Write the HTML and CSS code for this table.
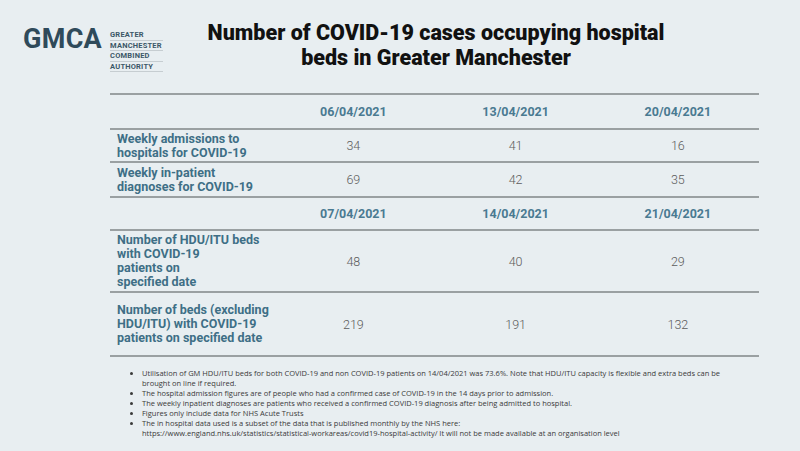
FILE: index.html
```html
<!DOCTYPE html>
<html lang="en">
<head>
<meta charset="utf-8">
<link rel="stylesheet" href="styles.css">
</head>
<body>
<div class="page">
  <header class="top">
    <div class="logo">
      <span class="logo-mark">GMCA</span>
      <div class="logo-words">
        <span>GREATER</span>
        <span>MANCHESTER</span>
        <span>COMBINED</span>
        <span>AUTHORITY</span>
      </div>
    </div>
    <h1 class="title">Number of COVID-19 cases occupying hospital<br>beds in Greater Manchester</h1>
  </header>

  <table class="data">
    <tr class="head">
      <td></td><th>06/04/2021</th><th>13/04/2021</th><th>20/04/2021</th>
    </tr>
    <tr class="r-short">
      <td class="label">Weekly admissions to<br>hospitals for COVID-19</td><td class="val">34</td><td class="val">41</td><td class="val">16</td>
    </tr>
    <tr class="r-mid">
      <td class="label">Weekly in-patient<br>diagnoses for COVID-19</td><td class="val">69</td><td class="val">42</td><td class="val">35</td>
    </tr>
    <tr class="head head2">
      <td></td><th>07/04/2021</th><th>14/04/2021</th><th>21/04/2021</th>
    </tr>
    <tr class="r-tall">
      <td class="label">Number of HDU/ITU beds<br>with COVID-19<br>patients on<br>specified date</td><td class="val">48</td><td class="val">40</td><td class="val">29</td>
    </tr>
    <tr class="r-tall2">
      <td class="label">Number of beds (excluding<br>HDU/ITU) with COVID-19<br>patients on specified date</td><td class="val">219</td><td class="val">191</td><td class="val">132</td>
    </tr>
  </table>

  <ul class="notes">
    <li>Utilisation of GM HDU/ITU beds for both COVID-19 and non COVID-19 patients on 14/04/2021 was 73.6%. Note that HDU/ITU capacity is flexible and extra beds can be brought on line if required.</li>
    <li>The hospital admission figures are of people who had a confirmed case of COVID-19 in the 14 days prior to admission.</li>
    <li>The weekly inpatient diagnoses are patients who received a confirmed COVID-19 diagnosis after being admitted to hospital.</li>
    <li>Figures only include data for NHS Acute Trusts</li>
    <li>The in hospital data used is a subset of the data that is published monthly by the NHS here:<br>https://www.england.nhs.uk/statistics/statistical-workareas/covid19-hospital-activity/ It will not be made available at an organisation level</li>
  </ul>
</div>
</body>
</html>
```

FILE: styles.css
```css
html, body {
  margin: 0;
  padding: 0;
}
body {
  background: #e8eef1;
  font-family: Roboto, "Liberation Sans", sans-serif;
  width: 800px;
  height: 451px;
  overflow: hidden;
}
.page {
  width: 800px;
  height: 451px;
}
.top {
  display: flex;
  align-items: flex-start;
  padding: 20px 0 0 23px;
  height: 72px;
  box-sizing: border-box;
}
.logo {
  display: flex;
  align-items: flex-start;
  width: 140px;
  flex: none;
}
.logo-mark {
  font-family: Roboto, sans-serif;
  font-weight: 700;
  font-size: 27px;
  line-height: 27px;
  color: #2f4a5a;
  letter-spacing: 0.3px;
  margin-top: 6px;
}
.logo-words {
  display: flex;
  flex-direction: column;
  margin-left: 8px;
  margin-top: 10px;
  width: 55px;
}
.logo-words span {
  font-size: 7.5px;
  line-height: 9px;
  height: 10.5px;
  box-sizing: border-box;
  font-weight: 700;
  color: #3c5868;
  letter-spacing: 0.2px;
  border-bottom: 1px solid #c6cdd1;
}
.title {
  flex: 1;
  margin: 0;
  padding-right: 91px;
  text-align: center;
  font-family: Roboto, sans-serif;
  font-weight: 900;
  font-size: 21.5px;
  line-height: 25px;
  color: #111;
}
.data {
  margin: 21px 0 0 110px;
  width: 649px;
  border-collapse: collapse;
  table-layout: fixed;
}
.data tr {
  border-top: 2px solid #9aa0a2;
}
.data tr:last-child {
  border-bottom: 2px solid #9aa0a2;
}
.data td, .data th {
  width: 25%;
  padding: 0;
  vertical-align: middle;
}
.head {
  height: 35px;
}
.head2 {
  height: 33px;
}
.data th {
  font-weight: 700;
  font-size: 12.5px;
  color: #4a7a91;
  text-align: center;
}
.label {
  font-weight: 700;
  font-size: 12.5px;
  line-height: 14px;
  color: #3e6f86;
  padding-left: 7px !important;
  white-space: nowrap;
}
.val {
  text-align: center;
  font-size: 12.5px;
  font-weight: 300;
  color: #5c5c5c;
}
.r-short { height: 33px; }
.r-mid { height: 35px; }
.r-tall { height: 62px; }
.r-tall2 { height: 64px; }
.notes {
  margin: 11px 0 0 0;
  padding: 0 0 0 142px;
  width: 585px;
  font-family: "Open Sans", sans-serif;
  font-size: 7.5px;
  line-height: 10px;
  color: #3a3a3a;
}
```
